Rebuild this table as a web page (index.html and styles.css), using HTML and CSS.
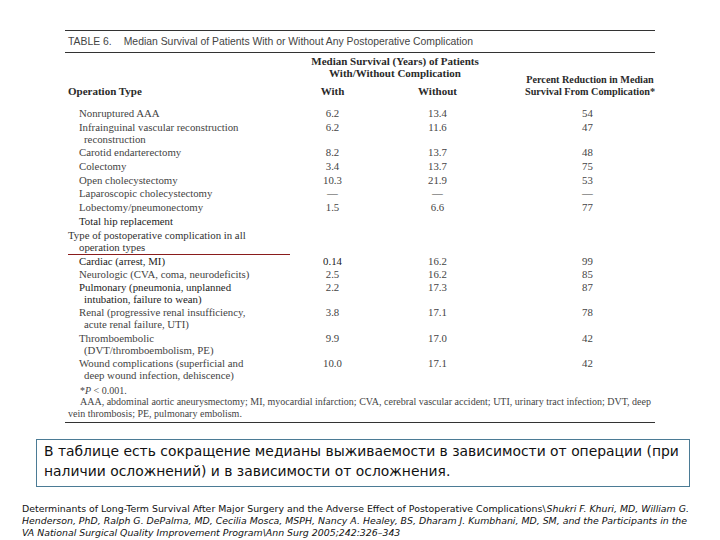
FILE: index.html
```html
<!DOCTYPE html>
<html lang="ru">
<head>
<meta charset="utf-8">
<title>Table 6</title>
<link rel="stylesheet" href="styles.css">
</head>
<body>
<div class="page">
  <section class="table6">
    <div class="title"><span class="tnum">TABLE 6.</span>Median Survival of Patients With or Without Any Postoperative Complication</div>
    <div class="head">
      <div class="h-group">Median Survival (Years) of Patients<br>With/Without Complication</div>
      <div class="h-op">Operation Type</div>
      <div class="h-with">With</div>
      <div class="h-without">Without</div>
      <div class="h-pct">Percent Reduction in Median<br>Survival From Complication*</div>
    </div>
    <div class="body ops">
      <div class="lbl">Nonruptured AAA</div><div class="v">6.2</div><div class="v">13.4</div><div class="p">54</div>
      <div class="lbl">Infrainguinal vascular reconstruction reconstruction</div><div class="v">6.2</div><div class="v">11.6</div><div class="p">47</div>
      <div class="lbl">Carotid endarterectomy</div><div class="v">8.2</div><div class="v">13.7</div><div class="p">48</div>
      <div class="lbl">Colectomy</div><div class="v">3.4</div><div class="v">13.7</div><div class="p">75</div>
      <div class="lbl">Open cholecystectomy</div><div class="v">10.3</div><div class="v">21.9</div><div class="p">53</div>
      <div class="lbl">Laparoscopic cholecystectomy</div><div class="v">—</div><div class="v">—</div><div class="p">—</div>
      <div class="lbl">Lobectomy/pneumonectomy</div><div class="v">1.5</div><div class="v">6.6</div><div class="p">77</div>
      <div class="lbl dark">Total hip replacement</div><div class="v"></div><div class="v"></div><div class="p"></div>
      <div class="lbl sect">Type of postoperative complication in all operation types</div><div class="v"></div><div class="v"></div><div class="p"></div>
    </div>
    <div class="body comps">
      <div class="lbl dark">Cardiac (arrest, MI)</div><div class="v dark">0.14</div><div class="v">16.2</div><div class="p">99</div>
      <div class="lbl">Neurologic (CVA, coma, neurodeficits)</div><div class="v">2.5</div><div class="v">16.2</div><div class="p">85</div>
      <div class="lbl dark">Pulmonary (pneumonia, unplanned intubation, failure to wean)</div><div class="v">2.2</div><div class="v">17.3</div><div class="p">87</div>
      <div class="lbl">Renal (progressive renal insufficiency, acute renal failure, UTI)</div><div class="v">3.8</div><div class="v">17.1</div><div class="p">78</div>
      <div class="lbl">Thromboembolic (DVT/thromboembolism, PE)</div><div class="v">9.9</div><div class="v">17.0</div><div class="p">42</div>
      <div class="lbl">Wound complications (superficial and deep wound infection, dehiscence)</div><div class="v">10.0</div><div class="v">17.1</div><div class="p">42</div>
    </div>
    <div class="notes">
      <p class="note">*<i>P</i> &lt; 0.001.</p>
      <p class="note just">AAA, abdominal aortic aneurysmectomy; MI, myocardial infarction; CVA, cerebral vascular accident; UTI, urinary tract infection; DVT, deep vein thrombosis; PE, pulmonary embolism.</p>
    </div>
  </section>
  <div class="caption">В таблице есть сокращение медианы выживаемости в зависимости от операции (при наличии осложнений) и в зависимости от осложнения.</div>
  <p class="cite">Determinants of Long-Term Survival After Major Surgery and the Adverse Effect of Postoperative Complications\<i class="authors">Shukri F. Khuri, MD, William G. Henderson, PhD, Ralph G. DePalma, MD, Cecilia Mosca, MSPH, Nancy A. Healey, BS, Dharam J. Kumbhani, MD, SM, and the Participants in the VA National Surgical Quality Improvement Program\Ann Surg 2005;242:326–343</i></p>
</div>
</body>
</html>
```

FILE: styles.css
```css
html, body {
  margin: 0;
  padding: 0;
  background: #ffffff;
}

.page {
  width: 720px;
  height: 540px;
  padding-top: 30px;
  box-sizing: border-box;
  overflow: hidden;
}

.table6 {
  margin-left: 65px;
  width: 590px;
  font-family: "Liberation Serif", "Times New Roman", serif;
  color: #333;
}

.title {
  border-top: 1px solid #333;
  border-bottom: 1.5px solid #333;
  height: 21px;
  line-height: 21px;
  padding-left: 3px;
  font-family: "Liberation Sans", Arial, sans-serif;
  font-size: 10.4px;
  color: #444;
  white-space: nowrap;
}

.tnum {
  margin-right: 12px;
}

.head {
  display: grid;
  grid-template-columns: 222px 85px 125px 155px;
  grid-template-rows: 23px 19px;
  padding: 2px 0 10px 3px;
  font-weight: bold;
  font-size: 11px;
  line-height: 12px;
  color: #2a2a2a;
}

.h-group {
  grid-column: 2 / 4;
  grid-row: 1;
  text-align: center;
}

.h-op {
  grid-column: 1;
  grid-row: 2;
  align-self: end;
}

.h-with,
.h-without {
  grid-row: 2;
  align-self: end;
  text-align: center;
}

.h-with { grid-column: 2; }
.h-without { grid-column: 3; }

.h-pct {
  grid-column: 4;
  grid-row: 1 / 3;
  align-self: end;
  justify-self: end;
  text-align: center;
  white-space: nowrap;
  font-size: 10.2px;
  margin-bottom: -1px;
}

.body {
  display: grid;
  grid-template-columns: 222px 85px 125px 155px;
  padding-left: 3px;
  font-size: 10.8px;
  line-height: 12px;
  color: #444;
}

.ops {
  row-gap: 1.7px;
}

.comps {
  row-gap: 1.3px;
}

.lbl {
  padding-left: 16px;
  text-indent: -5px;
  padding-right: 30px;
}

.lbl.sect {
  padding-left: 11px;
  text-indent: -11px;
  padding-right: 40px;
  border-bottom: 1px solid #8a1c1c;
  padding-bottom: 1px;
  color: #333;
}

.dark {
  color: #222;
}

.v {
  text-align: center;
}

.p {
  text-align: center;
  padding-left: 20px;
}

.notes {
  padding: 4px 4px 3px 3px;
  border-bottom: 1.5px solid #333;
  font-size: 10px;
  line-height: 11.5px;
  color: #444;
}

.note {
  margin: 0;
  text-indent: 12px;
}

.note.just {
  text-align: justify;
}

.caption {
  margin: 16px 0 0 36px;
  width: 654px;
  box-sizing: border-box;
  border: 1.5px solid #4b7b95;
  padding: 1px 0 5px 7px;
  font-family: "DejaVu Sans", Verdana, sans-serif;
  font-size: 13.9px;
  line-height: 20px;
  color: #111;
}

.cite {
  margin: 16px 0 0 22px;
  width: 672px;
  font-family: "DejaVu Sans", Verdana, sans-serif;
  font-size: 9.4px;
  line-height: 12px;
  color: #111;
}

.authors {
  margin-left: 1px;
}
```
